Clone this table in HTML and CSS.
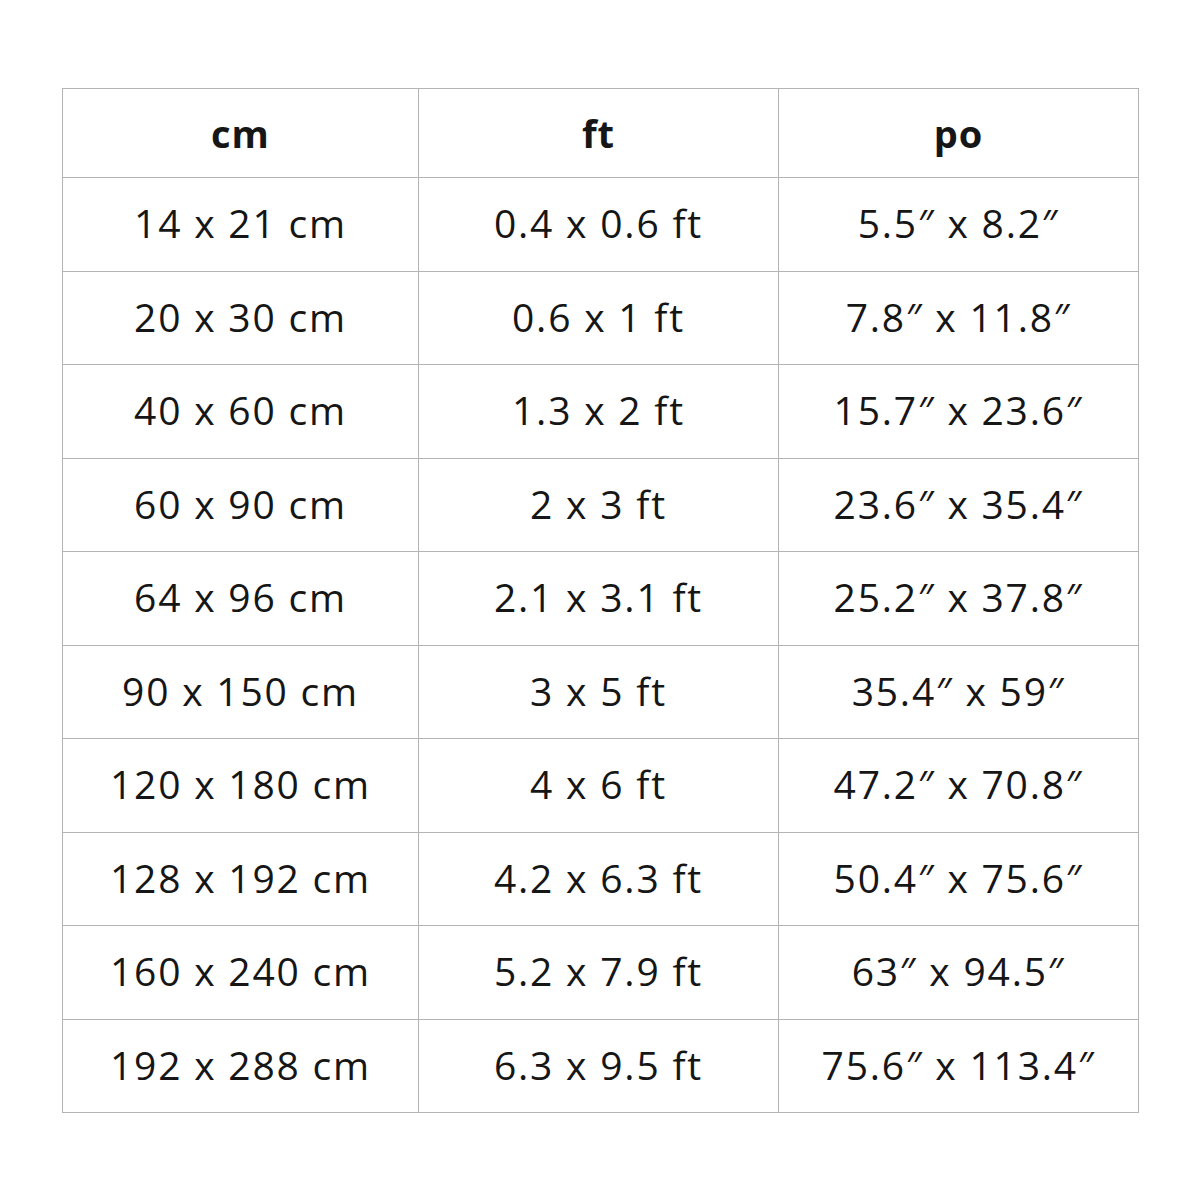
FILE: index.html
```html
<!DOCTYPE html>
<html>
<head>
<meta charset="utf-8">
<link rel="stylesheet" href="styles.css">
</head>
<body>
<div class="page">
<table class="sizes">
<colgroup><col class="c1"><col class="c2"><col class="c3"></colgroup>
<thead>
<tr><th>cm</th><th>ft</th><th>po</th></tr>
</thead>
<tbody>
<tr><td>14 x 21 cm</td><td>0.4 x 0.6 ft</td><td>5.5″ x 8.2″</td></tr>
<tr><td>20 x 30 cm</td><td>0.6 x 1 ft</td><td>7.8″ x 11.8″</td></tr>
<tr><td>40 x 60 cm</td><td>1.3 x 2 ft</td><td>15.7″ x 23.6″</td></tr>
<tr><td>60 x 90 cm</td><td>2 x 3 ft</td><td>23.6″ x 35.4″</td></tr>
<tr><td>64 x 96 cm</td><td>2.1 x 3.1 ft</td><td>25.2″ x 37.8″</td></tr>
<tr><td>90 x 150 cm</td><td>3 x 5 ft</td><td>35.4″ x 59″</td></tr>
<tr><td>120 x 180 cm</td><td>4 x 6 ft</td><td>47.2″ x 70.8″</td></tr>
<tr><td>128 x 192 cm</td><td>4.2 x 6.3 ft</td><td>50.4″ x 75.6″</td></tr>
<tr><td>160 x 240 cm</td><td>5.2 x 7.9 ft</td><td>63″ x 94.5″</td></tr>
<tr><td>192 x 288 cm</td><td>6.3 x 9.5 ft</td><td>75.6″ x 113.4″</td></tr>
</tbody>
</table>
</div>
</body>
</html>
```
FILE: styles.css
```css
html, body {
  margin: 0;
  padding: 0;
  background: #ffffff;
}
.page {
  width: 1200px;
  height: 1200px;
  padding: 88px 0 0 62px;
  box-sizing: border-box;
}
.sizes {
  border-collapse: collapse;
  width: 1076px;
  table-layout: fixed;
  font-family: "Open Sans", "Liberation Sans", sans-serif;
  color: #161616;
}
.c1 { width: 356px; }
.c2 { width: 360px; }
.c3 { width: 360px; }
.sizes th, .sizes td {
  border: 1.5px solid #b4b4b4;
  text-align: center;
  vertical-align: middle;
  padding: 0;
}
.sizes th {
  height: 88px;
  font-size: 38px;
  font-weight: 700;
  letter-spacing: 1px;
}
.sizes td {
  height: 89.5px;
  font-size: 39px;
  font-weight: 400;
  letter-spacing: 1.8px;
  padding-bottom: 3px;
}
```
